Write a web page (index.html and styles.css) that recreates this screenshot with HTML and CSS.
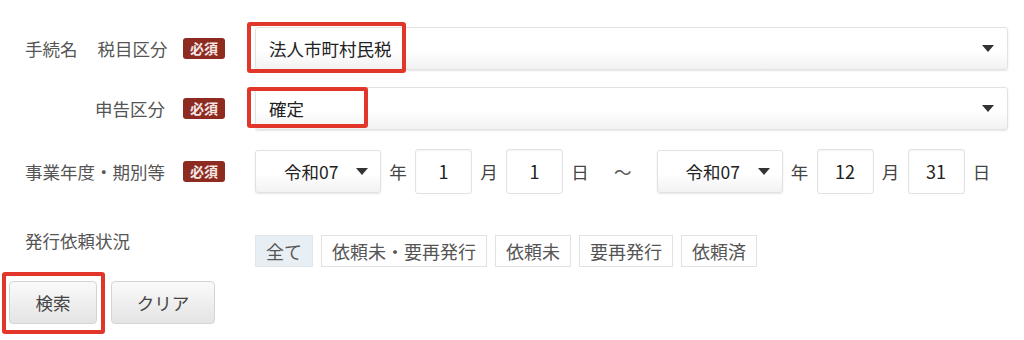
FILE: index.html
```html
<!DOCTYPE html>
<html lang="ja">
<head>
    <meta charset="UTF-8">
    <meta name="viewport" content="width=device-width, initial-scale=1.0">
    <title>検索条件</title>
    <link rel="stylesheet" href="styles.css">
</head>
<body>
    <form class="search">
        <div class="row">
            <div class="label"><span class="label-main">手続名</span>税目区分</div>
            <div class="req"><span class="badge">必須</span></div>
            <div class="field">
                <div class="select wide">
                    <span>法人市町村民税</span>
                    <i class="arrow"></i>
                </div>
                <span class="mark mark-1"></span>
            </div>
        </div>
        <div class="row row-2">
            <div class="label">申告区分</div>
            <div class="req"><span class="badge">必須</span></div>
            <div class="field">
                <div class="select wide">
                    <span>確定</span>
                    <i class="arrow"></i>
                </div>
                <span class="mark mark-2"></span>
            </div>
        </div>
        <div class="row row-3">
            <div class="label">事業年度・期別等</div>
            <div class="req"><span class="badge">必須</span></div>
            <div class="field dates">
                <div class="select era"><span>令和07</span><i class="arrow"></i></div>
                <span class="unit">年</span>
                <div class="num">1</div>
                <span class="unit">月</span>
                <div class="num">1</div>
                <span class="unit">日</span>
                <span class="tilde">～</span>
                <div class="select era"><span>令和07</span><i class="arrow"></i></div>
                <span class="unit">年</span>
                <div class="num">12</div>
                <span class="unit">月</span>
                <div class="num">31</div>
                <span class="unit">日</span>
            </div>
        </div>
        <div class="row row-4">
            <div class="label left">発行依頼状況</div>
            <div class="req"></div>
            <div class="field tabs">
                <a class="tab active">全て</a>
                <a class="tab">依頼未・要再発行</a>
                <a class="tab">依頼未</a>
                <a class="tab">要再発行</a>
                <a class="tab">依頼済</a>
            </div>
        </div>
        <div class="buttons">
            <div class="btn-wrap">
                <button type="button" class="btn search-btn">検索</button>
                <span class="mark mark-3"></span>
            </div>
            <button type="button" class="btn clear-btn">クリア</button>
        </div>
    </form>
</body>
</html>
```

FILE: styles.css
```css
body {
    margin: 0;
    background: #fff;
    font-family: "Noto Sans CJK JP", "Noto Sans", sans-serif;
    color: #555;
}
.search {
    padding: 27px 16px 16px 9px;
}
.row {
    display: flex;
    align-items: center;
}
.row-2 {
    margin-top: 17px;
}
.row-3 {
    margin-top: 19px;
}
.row-4 {
    margin-top: 37px;
    align-items: flex-start;
}
.label {
    width: 140px;
    margin-left: 16px;
    text-align: right;
    font-size: 17.5px;
    line-height: 20px;
    white-space: nowrap;
}
.label.left {
    text-align: left;
}
.label-main {
    margin-right: 20px;
}
.req {
    width: 90px;
    padding-left: 18px;
    box-sizing: border-box;
    display: flex;
}
.badge {
    display: block;
    height: 21px;
    line-height: 21px;
    padding: 0 7px;
    background: #8e2b21;
    color: #f4e6e4;
    font-size: 14px;
    font-weight: bold;
    border-radius: 3px;
}
.field {
    flex: 1;
    position: relative;
}
.select {
    display: flex;
    align-items: center;
    justify-content: space-between;
    box-sizing: border-box;
    height: 43px;
    border: 1px solid #e2e2e2;
    border-radius: 3px;
    background: linear-gradient(#fff 55%, #f2f2f2);
    box-shadow: 0 1px 2px rgba(0, 0, 0, .1);
    color: #222;
    font-size: 17.5px;
}
.select.wide {
    padding: 0 13px 0 13px;
}
.arrow {
    width: 0;
    height: 0;
    border-left: 6px solid transparent;
    border-right: 6px solid transparent;
    border-top: 7px solid #333;
}
.mark {
    position: absolute;
    border: 4px solid #e2362b;
    border-radius: 3px;
    pointer-events: none;
}
.mark-1 {
    left: -8px;
    top: -5px;
    width: 151px;
    height: 43px;
}
.mark-2 {
    left: -8px;
    top: 0;
    width: 113px;
    height: 33px;
}
.dates {
    display: flex;
    align-items: center;
    gap: 8px;
}
.select.era {
    width: 126px;
    height: 43px;
    padding: 0 12px 0 28px;
}
.unit {
    font-size: 17.5px;
    color: #444;
    width: 18px;
    text-align: center;
}
.num {
    box-sizing: border-box;
    width: 57px;
    height: 45px;
    line-height: 43px;
    border: 1px solid #e2e2e2;
    border-radius: 3px;
    text-align: center;
    color: #222;
    font-size: 18px;
    box-shadow: inset 0 1px 2px rgba(0, 0, 0, .05);
}
.tilde {
    padding: 0 17px;
    color: #555;
    font-size: 17.5px;
}
.tabs {
    display: flex;
    gap: 8px;
    margin-top: 4px;
}
.tab {
    box-sizing: border-box;
    height: 32px;
    line-height: 30px;
    padding: 0 10px;
    border: 1px solid #e2e2e2;
    background: #fff;
    color: #555;
    font-size: 18px;
}
.tab.active {
    background: #e7eff4;
    border-color: #e0e6ea;
}
.buttons {
    display: flex;
    gap: 14px;
    margin-top: 14px;
}
.btn-wrap {
    position: relative;
}
.btn {
    display: block;
    height: 43px;
    border: 1px solid #d4d4d4;
    border-radius: 4px;
    background: linear-gradient(#fafafa, #e4e4e4);
    color: #444;
    font-family: inherit;
    font-size: 17.5px;
}
.search-btn {
    width: 88px;
}
.clear-btn {
    width: 104px;
}
.mark-3 {
    left: -7px;
    top: -9px;
    width: 95px;
    height: 54px;
}
```
